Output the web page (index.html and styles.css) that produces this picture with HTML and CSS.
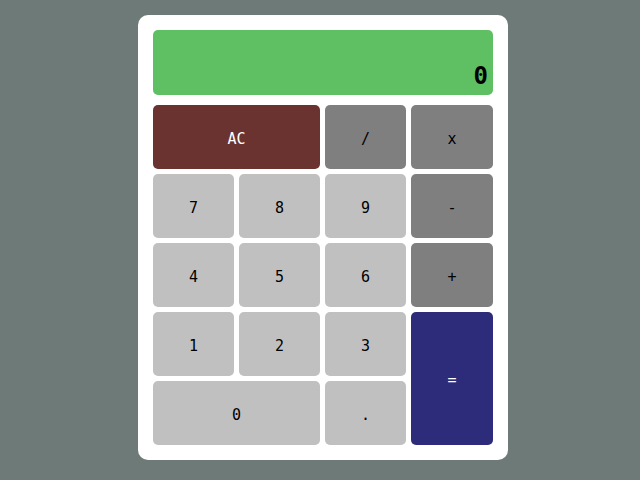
FILE: index.html
```html
<!DOCTYPE html>
<html>
<head>
<meta charset="utf-8">
<link rel="stylesheet" href="styles.css">
</head>
<body>
<div class="page">
  <div class="calc">
    <div class="display">0</div>
    <div class="keys">
      <div class="key clear span2">AC</div>
      <div class="key op">/</div>
      <div class="key op">x</div>
      <div class="key num">7</div>
      <div class="key num">8</div>
      <div class="key num">9</div>
      <div class="key op">-</div>
      <div class="key num">4</div>
      <div class="key num">5</div>
      <div class="key num">6</div>
      <div class="key op">+</div>
      <div class="key num">1</div>
      <div class="key num">2</div>
      <div class="key num">3</div>
      <div class="key eq tall">=</div>
      <div class="key num span2">0</div>
      <div class="key num">.</div>
    </div>
  </div>
</div>
</body>
</html>
```

FILE: styles.css
```css
html, body {
  margin: 0;
  padding: 0;
  background: #6e7a78;
  height: 100%;
}
.page {
  display: flex;
  justify-content: center;
  padding-top: 15px;
  padding-left: 6px;
}
.calc {
  width: 340px;
  padding: 15px;
  background: #ffffff;
  border-radius: 10px;
}
.display {
  height: 65px;
  box-sizing: border-box;
  background: #5fc063;
  border-radius: 5px;
  margin-bottom: 10px;
  display: flex;
  align-items: flex-end;
  justify-content: flex-end;
  padding: 0 5px 5px 0;
  font-family: "DejaVu Sans Mono", monospace;
  font-weight: bold;
  font-size: 24px;
  line-height: 28px;
  color: #000;
}
.keys {
  display: grid;
  grid-template-columns: 81px 81px 81px 1fr;
  grid-auto-rows: 64px;
  gap: 5px;
}
.key {
  display: flex;
  align-items: center;
  justify-content: center;
  box-sizing: border-box;
  padding-top: 3px;
  border-radius: 5px;
  font-family: "DejaVu Sans Mono", monospace;
  font-size: 15px;
  color: #000;
}
.span2 { grid-column: span 2; }
.tall { grid-row: span 2; }
.clear { background: #6a3330; color: #fff; }
.op { background: #7f7f7f; }
.num { background: #c0c0c0; }
.eq { background: #2d2c7a; color: #fff; }
```
